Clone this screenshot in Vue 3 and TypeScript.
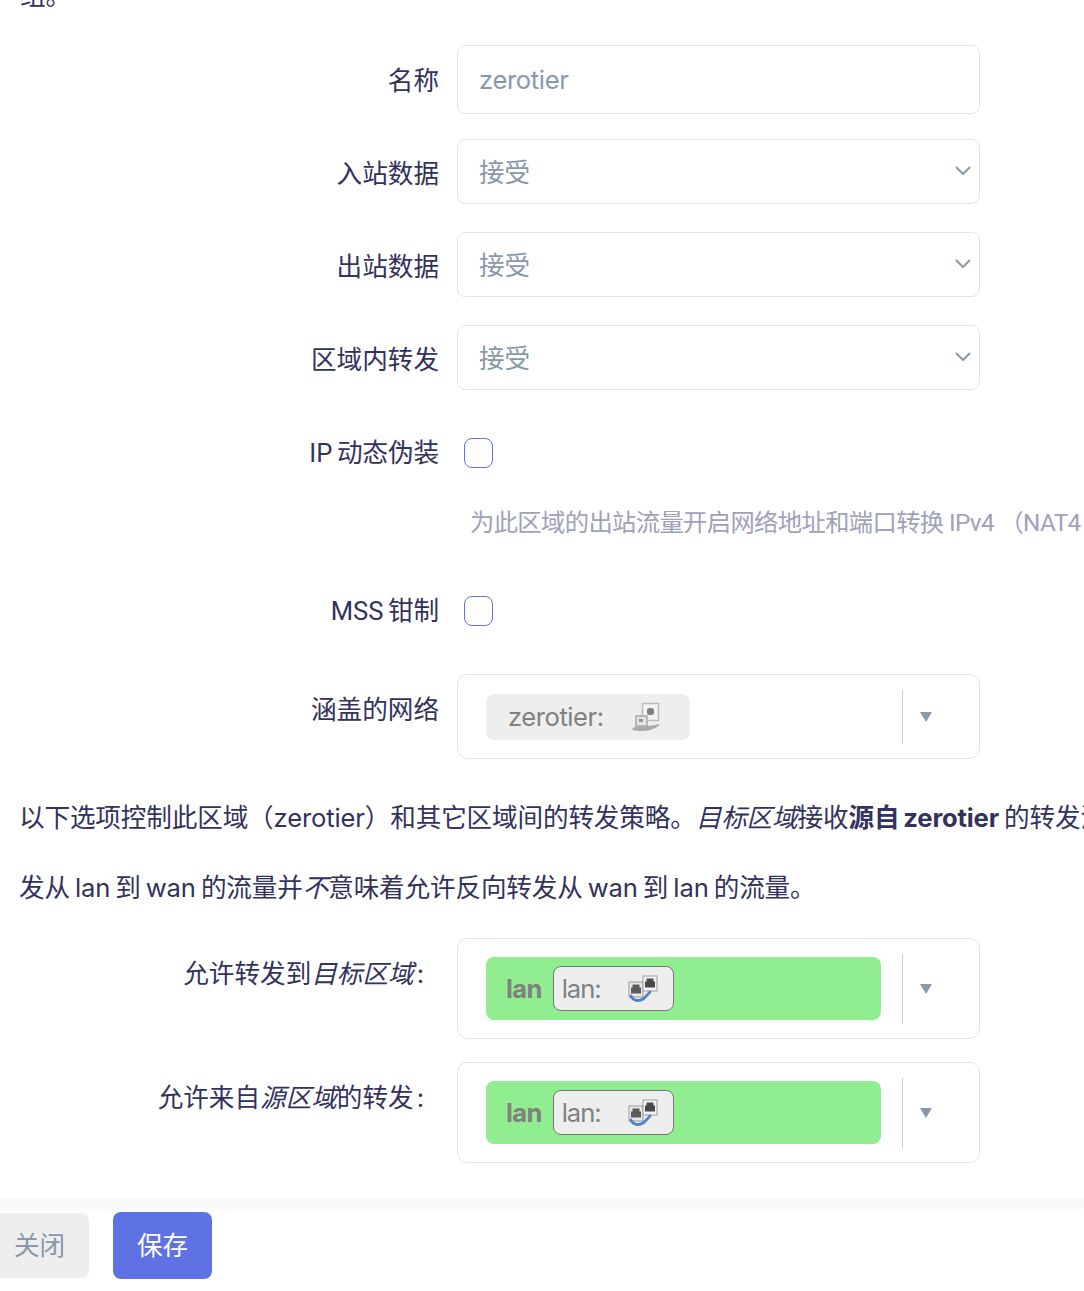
<script setup lang="ts">
const selects: { label: string }[] = [
  { label: '入站数据' },
  { label: '出站数据' },
  { label: '区域内转发' },
]
const zones: { id: string; before: string; em: string; after: string }[] = [
  { id: 'dest', before: '允许转发到', em: '目标区域', after: '' },
  { id: 'src', before: '允许来自', em: '源区域', after: '的转发' },
]
</script>

<template>
  <div class="page">
    <p class="intro">组。</p>

    <div class="row row-name">
      <label class="label">名称</label>
      <input class="control input" placeholder="zerotier" />
    </div>

    <div v-for="s in selects" :key="s.label" class="row row-select">
      <label class="label">{{ s.label }}</label>
      <div class="select-wrap">
        <select class="control select">
          <option>接受</option>
        </select>
        <svg class="chevron" viewBox="0 0 16 10" width="16" height="10">
          <path d="M1.5 1.5 8 8l6.5-6.5" fill="none" stroke="#8898aa" stroke-width="2" stroke-linecap="round" stroke-linejoin="round" />
        </svg>
      </div>
    </div>

    <div class="row row-check first-check">
      <label class="label label-latin">IP 动态伪装</label>
      <input class="check" type="checkbox" />
    </div>
    <div class="help">为此区域的出站流量开启网络地址和端口转换 IPv4 （NAT4 或 NAT44）</div>

    <div class="row row-check second-check">
      <label class="label label-latin">MSS 钳制</label>
      <input class="check" type="checkbox" />
    </div>

    <div class="row row-net">
      <label class="label">涵盖的网络</label>
      <div class="multi">
        <div class="multi-main">
          <div class="net-tag">
            <span>zerotier:</span>
            <svg class="net-icon" viewBox="0 0 30 30" width="30" height="30">
              <rect x="11.5" y="1.5" width="16" height="17" fill="#f4f4f4" stroke="#bdbdbd" stroke-width="1.5" />
              <rect x="16" y="6" width="7" height="7" rx="2.5" fill="#808080" />
              <rect x="5" y="14" width="11" height="10" fill="#e4e4e4" stroke="#a8a8a8" stroke-width="1.5" />
              <path d="M8 17h4v3H8z" fill="#939393" />
              <path d="M1 27c3-3 8-3 13-3 5 0 10-1 14-2v2c-4 2-9 5-15 5-5 0-10 0-12-2z" fill="#aaa" />
            </svg>
          </div>
        </div>
        <div class="multi-side">
          <svg class="arrow" viewBox="0 0 12 10" width="12" height="10"><path d="M0 0h12L6 10z" fill="#8898aa" /></svg>
        </div>
      </div>
    </div>

    <div class="policy">
      <p>以下选项控制此区域（zerotier）和其它区域间的转发策略。<em>目标区域</em>接收<strong>源自 zerotier</strong> 的转发流量，<em>源区域</em>接收<strong>目标为 zerotier</strong> 的转发流量。转发规则具有方向性，允许转</p>
      <p>发从 lan 到 wan 的流量并<em>不</em>意味着允许反向转发从 wan 到 lan 的流量。</p>
    </div>

    <div v-for="z in zones" :key="z.id" class="row row-zone">
      <label class="label label-zone">{{ z.before }}<em>{{ z.em }}</em>{{ z.after }}<span class="colon">:</span></label>
      <div class="multi">
        <div class="multi-main">
          <div class="zone">
            <b>lan</b>
            <div class="zone-tag">
              <span>lan:</span>
              <svg class="lan-icon" viewBox="0 0 30 28" width="30" height="28">
                <rect x="1" y="7" width="14" height="15" fill="#e8e8e8" stroke="#999" />
                <path d="M4.500 9.500h7v3h1.500v6H3v-6h1.500z" fill="#5a5a5a" />
                <rect x="15" y="1" width="14" height="15" fill="#f4f4f4" stroke="#999" />
                <path d="M18.500 3.500h7v3h1.500v6h-10v-6h1.500z" fill="#484848" />
                <path d="M3 21c2 5 8 5.500 12 3 3-2 5-5 7-7" fill="none" stroke="#4b82c8" stroke-width="2.800" stroke-linecap="round" />
              </svg>
            </div>
          </div>
        </div>
        <div class="multi-side">
          <svg class="arrow" viewBox="0 0 12 10" width="12" height="10"><path d="M0 0h12L6 10z" fill="#8898aa" /></svg>
        </div>
      </div>
    </div>

    <footer class="footer">
      <button class="btn btn-close" type="button">关闭</button>
      <button class="btn btn-save" type="button">保存</button>
    </footer>
  </div>
</template>

<style scoped>
.page {
  width: 1084px;
  height: 1291px;
  overflow: hidden;
  background: #fff;
  color: #32325d;
  font-family: Inter, "Noto Sans CJK SC", sans-serif;
  font-size: 25.6px;
  line-height: 38px;
}
.intro {
  margin: -23px 0 30px 20px;
  height: 38px;
  white-space: nowrap;
}
.row {
  display: grid;
  grid-template-columns: 439px 523px;
  column-gap: 18px;
}
.label {
  text-align: right;
  white-space: nowrap;
}
.label-latin {
  font-family: Roboto, "Noto Sans CJK SC", sans-serif;
  word-spacing: -1.5px;
  letter-spacing: -0.1px;
}
.row-name { height: 69px; margin-bottom: 25px; }
.row-name .label { padding-top: 17px; }
.row-select { height: 65px; margin-bottom: 28px; }
.row-select .label { padding-top: 16px; }
.control {
  width: 100%;
  height: 100%;
  box-sizing: border-box;
  border: 1px solid #e1e4ea;
  border-radius: 8px;
  background: #fff;
  padding: 0 21px;
  font: inherit;
  color: #8898aa;
  outline: none;
}
.input { letter-spacing: -0.35px; padding-left: 21px; }
.input::placeholder { color: #8898aa; opacity: 1; }
.select { appearance: none; padding-top: 3px; }
.select-wrap { position: relative; }
.chevron { position: absolute; right: 9px; top: 27px; }
.first-check { margin-top: 48px; height: 29px; }
.second-check { margin-top: 55px; height: 30px; }
.row-check .label { line-height: 30px; }
.check {
  appearance: none;
  margin: 0 0 0 7px;
  width: 29px;
  height: 100%;
  box-sizing: border-box;
  border: 1.3px solid #5e72e4;
  border-radius: 8px;
  background: #fff;
}
.help {
  margin: 38px 0 0 470px;
  height: 36px;
  line-height: 36px;
  width: 614px;
  overflow: hidden;
  white-space: nowrap;
  font-family: Roboto, "Noto Sans CJK SC", sans-serif;
  font-size: 24.3px;
  letter-spacing: -0.62px;
  color: #a0a1b8;
}
.row-net { margin-top: 48px; height: 85px; }
.row-net .label { padding-top: 17px; }
.multi {
  display: flex;
  box-sizing: border-box;
  border: 1px solid #e1e4ea;
  border-radius: 10px;
  background: #fff;
}
.multi-main {
  width: 444px;
  box-sizing: border-box;
  padding-left: 28px;
}
.multi-side {
  flex: 1;
  display: flex;
  align-items: center;
}
.multi-side::before {
  content: "";
  width: 1px;
  height: 54px;
  background: #ccc;
}
.row-zone .multi-side::before { height: 70px; }
.arrow { margin-left: 17px; }
.net-tag {
  margin-top: 19px;
  width: 204px;
  height: 46px;
  display: flex;
  align-items: center;
  box-sizing: border-box;
  padding-left: 22px;
  border-radius: 8px;
  background: #eee;
  color: #808080;
  letter-spacing: -0.45px;
}
.net-icon { margin-left: 27px; filter: blur(0.4px); }
.policy {
  margin: 40px 0 0 19px;
  width: 1065px;
  overflow: hidden;
  letter-spacing: -0.14px;
  word-spacing: -2px;
}
.policy p {
  margin: 0 0 33px;
  height: 38px;
  white-space: nowrap;
}
.policy p:first-child { margin-bottom: 32px; }
.policy em, .label em { font-style: italic; }
.policy strong { font-weight: 700; }
.row-zone { height: 101px; margin-bottom: 23px; }
.policy + .row-zone { margin-top: -2px; }
.label-zone { padding: 17px 15px 0 0; box-sizing: border-box; }
.colon { padding-left: 3px; }
.zone {
  margin-top: 18px;
  width: 395px;
  height: 63px;
  display: flex;
  align-items: center;
  box-sizing: border-box;
  padding-left: 20px;
  border-radius: 8px;
  background: #90ee90;
  color: #808080;
}
.zone b { font-weight: 700; letter-spacing: -0.7px; }
.zone-tag {
  margin-left: 11px;
  width: 121px;
  height: 45px;
  display: flex;
  align-items: center;
  box-sizing: border-box;
  padding-left: 8px;
  border: 1px solid #777;
  border-radius: 8px;
  background: #eee;
  letter-spacing: -1px;
}
.lan-icon { margin-left: 27px; filter: blur(0.4px); }
.footer {
  margin-top: 36px;
  padding-top: 13px;
  display: flex;
  gap: 24px;
  align-items: center;
  background: linear-gradient(#f6f8f9, #fff 18px);
}
.btn {
  width: 99px;
  border: 0;
  border-radius: 8px;
  font: inherit;
  padding: 0;
}
.btn-close {
  margin-left: -10px;
  height: 65px;
  background: #eee;
  color: #8898aa;
}
.btn-save {
  height: 67px;
  background: #5e72e4;
  color: #fff;
}
</style>
